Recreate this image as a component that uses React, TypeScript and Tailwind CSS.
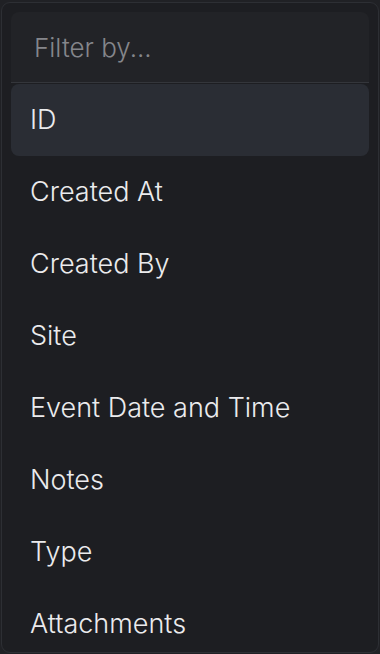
const fields = [
  'ID',
  'Created At',
  'Created By',
  'Site',
  'Event Date and Time',
  'Notes',
  'Type',
  'Attachments',
];

export default function App() {
  const active = 'ID';

  return (
    <div className="h-[654px] w-[380px] bg-[#202125] p-[1px] pt-[2px]" style={{ fontFamily: 'Inter, "Noto Sans", sans-serif' }}>
      <div className="flex h-full flex-col overflow-hidden rounded-[9px] border border-[#2d2f34] bg-[#1d1e22] px-[9px] pt-[9px]">
        <div className="flex h-[71px] shrink-0 items-center rounded-t-[8px] border-b border-[#34363b] bg-[#222327] px-[23px]">
          <input
            placeholder="Filter by..."
            className="w-full bg-transparent text-[26px] font-light text-[#e8e8ea] outline-none placeholder:text-[#85868b]"
          />
        </div>
        <ul className="flex shrink-0 flex-col pt-[1px]">
          {fields.map((f) => (
            <li
              key={f}
              className={`flex h-[72px] shrink-0 items-center rounded-[8px] px-[19px] text-[27px] font-light text-[#ebebed] ${
                f === active ? 'bg-[#2a2d34]' : ''
              }`}
            >
              {f}
            </li>
          ))}
        </ul>
      </div>
    </div>
  );
}
